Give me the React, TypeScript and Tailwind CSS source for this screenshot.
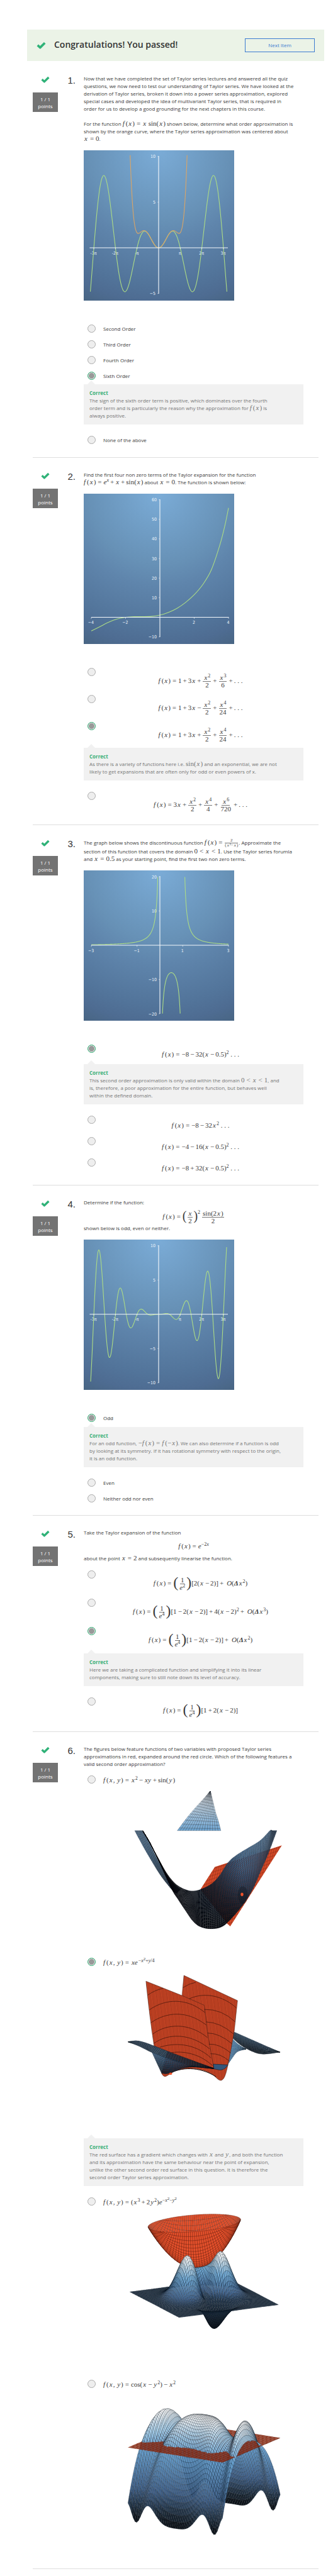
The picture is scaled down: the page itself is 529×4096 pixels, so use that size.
import React from "react";

type Pt = [number, number];

/* ---------- small icons ---------- */

function CheckIcon({ className }: { className: string }) {
  return (
    <svg viewBox="0 0 27 21" className={className} aria-hidden="true">
      <path
        d="M3.2 10.2 L10.4 17 L23.8 3.8"
        fill="none"
        stroke="#2fb278"
        strokeWidth="6.6"
        strokeLinejoin="round"
      />
    </svg>
  );
}

/* ---------- mathematics ---------- */

type Kids = { children?: React.ReactNode };

const M = ({ children }: Kids) => (
  <span className="whitespace-nowrap font-['Liberation_Serif',serif] text-[11px] leading-[10px]">{children}</span>
);
const X = ({ children = "x" }: Kids) => <i className="px-px">{children}</i>;
const Op = ({ children }: Kids) => <span className="mx-[2px]">{children}</span>;
const Rel = ({ children = "=" }: Kids) => <span className="mx-[3px]">{children}</span>;
const Sup = ({ children }: Kids) => <span className="align-[4px] text-[8px] leading-[0px]">{children}</span>;
const Upper = ({ children }: Kids) => <span className="align-[7px] text-[7px] leading-[0px]">{children}</span>;
const Fx = () => (
  <>
    <i className="pr-[2px]">f</i>(<X />)
  </>
);
const Fxy = () => (
  <>
    <i className="pr-[2px]">f</i>(<X />, <X>y</X>)
  </>
);
function Frac({ top, bottom }: { top: React.ReactNode; bottom: React.ReactNode }) {
  return (
    <span className="mx-px inline-flex flex-col items-center align-middle leading-[11px]">
      <span className="border-b border-[#777] px-px">{top}</span>
      <span className="px-px">{bottom}</span>
    </span>
  );
}
function Eq({ children }: Kids) {
  return (
    <span className="block whitespace-nowrap font-['Liberation_Serif',serif] text-[11px] leading-[12px]">
      {children}
    </span>
  );
}
const Big = ({ children }: Kids) => <span className="align-[-3px] text-[24px] leading-[0px]">{children}</span>;
const Mid = ({ children }: Kids) => <span className="align-[-2px] text-[20px] leading-[0px]">{children}</span>;

/* ---------- function plots ---------- */

function smooth(pts: Pt[]) {
  let d = `M${pts[0][0].toFixed(2)} ${pts[0][1].toFixed(2)}`;
  for (let i = 0; i < pts.length - 1; i++) {
    const a = pts[Math.max(i - 1, 0)];
    const b = pts[i];
    const c = pts[i + 1];
    const e = pts[Math.min(i + 2, pts.length - 1)];
    d += `C${(b[0] + (c[0] - a[0]) / 6).toFixed(2)} ${(b[1] + (c[1] - a[1]) / 6).toFixed(2)} ${(
      c[0] -
      (e[0] - b[0]) / 6
    ).toFixed(2)} ${(c[1] - (e[1] - b[1]) / 6).toFixed(2)} ${c[0].toFixed(2)} ${c[1].toFixed(2)}`;
  }
  return d;
}

function sample(f: (x: number) => number, from: number, to: number, n: number): Pt[] {
  return Array.from({ length: n + 1 }, (_, i) => {
    const x = from + ((to - from) * i) / n;
    return [x, f(x)] as Pt;
  });
}

type Curve = { pts: Pt[]; color: string };
type PlotProps = {
  id: string;
  title: string;
  ox: number;
  oy: number;
  sx: number;
  sy: number;
  xAxis: Pt;
  yAxis: Pt;
  xTicks: [number, string][];
  yTicks: [number, string][];
  curves: Curve[];
};

function Plot({ id, title, ox, oy, sx, sy, xAxis, yAxis, xTicks, yTicks, curves }: PlotProps) {
  const text = "fill-[#edf4fa] font-['DejaVu_Sans_Condensed','DejaVu_Sans',sans-serif] text-[7px]";
  return (
    <svg viewBox="0 0 239 239" className="mt-3 block h-[239px] w-[239px]" role="img" aria-label={title}>
      <defs>
        <radialGradient id={id} cx="0.5" cy="0" r="1.12">
          <stop offset="0" stopColor="#7bacd7" />
          <stop offset="0.42" stopColor="#6791b6" />
          <stop offset="0.55" stopColor="#5f85ac" />
          <stop offset="0.8" stopColor="#52749a" />
          <stop offset="0.9" stopColor="#4e6c92" />
          <stop offset="1" stopColor="#486583" />
        </radialGradient>
      </defs>
      <rect width="239" height="239" fill={`url(#${id})`} />
      {yTicks.map(([v, label]) => (
        <text key={label} x={ox - 5} y={oy - v * sy + 2.6} textAnchor="end" className={text}>
          {label}
        </text>
      ))}
      {xTicks.map(([v, label]) => (
        <text key={label} x={ox + v * sx - 0.5} y={oy + 10.5} textAnchor="middle" className={text}>
          {label}
        </text>
      ))}
      {curves.map((c, i) => (
        <path
          key={i}
          d={smooth(c.pts.map(([x, y]) => [ox + x * sx, oy - y * sy] as Pt))}
          fill="none"
          stroke={c.color}
          strokeWidth="1.1"
        />
      ))}
      <g stroke="#f4f8fc" strokeWidth="1.1">
        <path d={`M${xAxis[0]} ${oy}H${xAxis[1]}M${ox} ${yAxis[0]}V${yAxis[1]}`} />
        <path
          strokeWidth="0.6"
          d={
            yTicks.map(([v]) => `M${ox - 1.6} ${oy - v * sy}h1.6`).join("") +
            xTicks.map(([v]) => `M${ox + v * sx} ${oy}v2.4`).join("")
          }
        />
      </g>
    </svg>
  );
}

const GREEN = "#acdb86";
const ORANGE = "#dba566";
const PI = Math.PI;
const piTicks: [number, string][] = [
  [-3 * PI, "-3π"],
  [-2 * PI, "-2π"],
  [-PI, "-π"],
  [PI, "π"],
  [2 * PI, "2π"],
  [3 * PI, "3π"],
];

/* ---------- surface drawings ---------- */

type Stop = [number, number, number, number];

function ramp(stops: Stop[], t: number) {
  let i = 0;
  while (i < stops.length - 2 && t > stops[i + 1][0]) i++;
  const a = stops[i];
  const b = stops[i + 1];
  const k = Math.min(1, Math.max(0, (t - a[0]) / (b[0] - a[0])));
  return `rgb(${[1, 2, 3].map((j) => Math.round(a[j] + (b[j] - a[j]) * k)).join(",")})`;
}

type Quad = { pts: Pt[]; depth: number; fill: string; line: string };

function mesh(
  n: number,
  m: number,
  at: (u: number, v: number) => { p: Pt; depth: number },
  fill: (u: number, v: number) => string,
  line: string,
): Quad[] {
  const out: Quad[] = [];
  for (let i = 0; i < n; i++)
    for (let j = 0; j < m; j++) {
      const c = [at(i / n, j / m), at((i + 1) / n, j / m), at((i + 1) / n, (j + 1) / m), at(i / n, (j + 1) / m)];
      out.push({
        pts: c.map((q) => q.p),
        depth: c.reduce((s, q) => s + q.depth, 0) / 4,
        fill: fill((i + 0.5) / n, (j + 0.5) / m),
        line,
      });
    }
  return out;
}

function Quads({ quads }: { quads: Quad[] }) {
  return (
    <g strokeWidth="0.4" strokeLinejoin="round">
      {quads.map((q, i) => (
        <polygon
          key={i}
          points={q.pts.map((p) => `${p[0].toFixed(1)},${p[1].toFixed(1)}`).join(" ")}
          fill={q.fill}
          stroke={q.line}
          vectorEffect="non-scaling-stroke"
        />
      ))}
    </g>
  );
}

function along(pts: Pt[], t: number): Pt {
  const s = t * (pts.length - 1);
  const i = Math.min(Math.floor(s), pts.length - 2);
  const k = s - i;
  const p0 = pts[Math.max(i - 1, 0)];
  const p1 = pts[i];
  const p2 = pts[i + 1];
  const p3 = pts[Math.min(i + 2, pts.length - 1)];
  const f = (d: 0 | 1) =>
    0.5 *
    (2 * p1[d] +
      (p2[d] - p0[d]) * k +
      (2 * p0[d] - 5 * p1[d] + 4 * p2[d] - p3[d]) * k * k +
      (3 * p1[d] - p0[d] - 3 * p2[d] + p3[d]) * k * k * k);
  return [f(0), f(1)];
}

function loft(a: Pt[], b: Pt[], n: number, m: number, fill: (p: Pt) => string, line: string) {
  const at = (u: number, v: number): Pt => {
    const p = along(a, u);
    const q = along(b, u);
    return [p[0] + (q[0] - p[0]) * v, p[1] + (q[1] - p[1]) * v];
  };
  return mesh(n, m, (u, v) => ({ p: at(u, v), depth: 0 }), (u, v) => fill(at(u, v)), line);
}

const BLUE_HEIGHTS: Stop[] = [
  [-10, 8, 10, 13],
  [-8.6, 30, 44, 58],
  [-6.5, 66, 98, 138],
  [-2.5, 106, 162, 208],
  [-1, 160, 200, 228],
  [0.4, 226, 234, 240],
  [1, 246, 246, 246],
];

function cosineSurface(): Quad[] {
  const project = (x: number, y: number, z: number) => ({
    p: [961 - 45.3 * x + 74.2 * y, 720 + 25.8 * x + 15.8 * y - 58 * (z + 2)] as Pt,
    depth: 74.2 * x + 45.3 * y + z * 0.01,
  });
  const f = (x: number, y: number) => Math.cos(x - y * y) - x * x;
  const g = (t: number) => -3 + 6 * t;
  const n = 54;
  const blue = mesh(
    n,
    n,
    (u, v) => project(g(u), g(v), f(g(u), g(v))),
    (u, v) => ramp(BLUE_HEIGHTS, f(g(u), g(v))),
    "rgba(10,18,26,0.55)",
  );
  const red = mesh(
    n,
    n,
    (u, v) => project(g(u), g(v), -2),
    (_, v) => (Math.floor(v * n) % 2 ? "#8f2f18" : "#b13d20"),
    "rgba(40,10,4,0.25)",
  );
  return [...blue, ...red].sort((a, b) => a.depth - b.depth);
}

const PEAK_HEIGHTS: Stop[] = [
  [-0.41, 12, 16, 22],
  [-0.1, 30, 46, 62],
  [0.02, 36, 56, 78],
  [0.12, 66, 100, 142],
  [0.4, 116, 172, 214],
  [0.58, 196, 218, 232],
  [0.7, 248, 248, 248],
];

function peaksSurface(): Quad[] {
  const f = (x: number, y: number) => (x * x * x + 2 * y * y) * Math.exp(-x * x - y * y);
  const g = (t: number) => -3 + 6 * t;
  const bowl = mesh(
    34,
    34,
    (a, b) => {
      const u = 2 * a - 1;
      const v = 2 * b - 1;
      const s = u * Math.sqrt(1 - (v * v) / 2);
      const t = v * Math.sqrt(1 - (u * u) / 2);
      const r2 = s * s + t * t;
      return { p: [928 + s * 218 - r2 * 13, 1166 - s * 20 + t * 47 - r2 * 246] as Pt, depth: t };
    },
    () => "#e4502b",
    "rgba(40,10,4,0.6)",
  ).sort((p, q) => p.depth - q.depth);
  const blue = mesh(
    60,
    60,
    (u, v) => {
      const x = g(u);
      const y = g(v);
      return {
        p: [961 - 38.7 * x + 78 * y, 1338 - 23.8 * x - 11.8 * y - 340 * f(x, y)] as Pt,
        depth: -(78 * x + 38.7 * y),
      };
    },
    (u, v) => ramp(PEAK_HEIGHTS, f(g(u), g(v))),
    "rgba(10,18,26,0.55)",
  ).sort((p, q) => p.depth - q.depth);
  return [...bowl, ...blue];
}

const clamp = (t: number) => Math.min(1, Math.max(0, t));

function SaddleFigure() {
  const tip = loft(
    [[425, 243], [500, 178], [565, 127], [625, 84], [686, 38]],
    [[773, 243], [752, 190], [732, 150], [712, 95], [690, 38]],
    14,
    16,
    (p) => ramp([[38, 245, 247, 250], [130, 190, 214, 234], [243, 108, 163, 208]], p[1]),
    "rgba(10,18,26,0.6)",
  );
  const arm = loft(
    [[85, 243], [150, 322], [230, 412], [300, 484], [385, 553], [420, 570]],
    [[148, 243], [195, 298], [255, 378], [320, 455], [380, 508], [450, 550]],
    40,
    10,
    (p) => ramp([[243, 92, 126, 158], [380, 62, 98, 132], [560, 30, 46, 64]], p[1]),
    "rgba(5,10,16,0.5)",
  );
  const body = loft(
    [[148, 243], [200, 300], [270, 385], [340, 465], [410, 520], [480, 548], [545, 558], [610, 550], [700, 520], [765, 475], [830, 410], [900, 370], [1000, 330], [1090, 293], [1165, 243], [1180, 243]],
    [[152, 246], [218, 320], [295, 425], [385, 553], [430, 600], [490, 660], [550, 715], [610, 745], [695, 756], [790, 742], [880, 685], [960, 620], [1030, 545], [1090, 455], [1150, 365], [1220, 243]],
    90,
    26,
    ([x, y]) => {
      const k = clamp((x - 380) / 560) * clamp((770 - y) / 330);
      return ramp([[0, 6, 8, 12], [0.35, 24, 36, 50], [0.75, 54, 84, 116], [1, 82, 118, 152]], k * (0.85 + 0.15 * clamp((430 - y) / 150)));
    },
    "rgba(4,8,14,0.45)",
  );
  return (
    <svg viewBox="-166 17 1558 765" preserveAspectRatio="none" className="block h-[233px] w-full" role="img" aria-label="Saddle surface with a red tangent plane">
      <defs>
        <pattern id="planeLines" width="14" height="17" patternUnits="userSpaceOnUse" patternTransform="rotate(-12)">
          <rect width="14" height="17" fill="#d94a28" />
          <path d="M0 2H14M2 0V17" stroke="#3a0f06" strokeWidth="2" opacity="0.6" />
        </pattern>
      </defs>
      <Quads quads={tip} />
      <polygon points="610,550 725,432 1260,320 848,743 822,728" fill="url(#planeLines)" />
      <Quads quads={arm} />
      <Quads quads={body} />
      <ellipse cx="948" cy="580" rx="40" ry="46" fill="#0b131c" opacity="0.35" />
      <ellipse cx="942" cy="576" rx="11" ry="9" fill="#f0522b" />
    </svg>
  );
}

function SheetsFigure() {
  const wing = loft(
    [[33, 1345], [100, 1340], [170, 1350], [260, 1372], [400, 1408], [560, 1446], [715, 1483]],
    [[33, 1347], [110, 1366], [180, 1388], [225, 1402], [380, 1440], [560, 1472], [715, 1485]],
    50,
    9,
    (p) => ramp([[33, 62, 92, 120], [300, 44, 70, 94], [715, 30, 46, 62]], p[0]),
    "rgba(5,10,16,0.55)",
  );
  const belly = loft(
    [[222, 1400], [300, 1420], [400, 1440], [500, 1462], [600, 1474], [715, 1484]],
    [[300, 1510], [345, 1512], [400, 1500], [470, 1484], [560, 1477], [715, 1486]],
    30,
    8,
    (p) => ramp([[1400, 74, 112, 148], [1450, 50, 78, 106], [1510, 24, 36, 50]], p[1]),
    "rgba(5,10,16,0.5)",
  );
  const back = loft(
    [[860, 1289], [930, 1309], [1010, 1332], [1100, 1358], [1245, 1399]],
    [[860, 1322], [930, 1362], [1020, 1395], [1110, 1410], [1245, 1400]],
    40,
    9,
    ([x, y]) => ramp([[0, 66, 100, 130], [1, 22, 34, 46]], clamp((y - 1290 - (x - 860) * 0.2) / 60)),
    "rgba(5,10,16,0.55)",
  );
  const slope = loft(
    [[850, 1318], [880, 1340], [920, 1362], [975, 1384]],
    [[820, 1472], [860, 1434], [905, 1398], [975, 1384]],
    12,
    12,
    () => "#5f98c8",
    "rgba(5,10,16,0.5)",
  );
  return (
    <svg viewBox="-166 990 1558 570" preserveAspectRatio="none" className="mt-[6px] block h-[174px] w-full" role="img" aria-label="Folded blue surface with a steep red approximation">
      <defs>
        <pattern id="sheetLines" width="9" height="40" patternUnits="userSpaceOnUse" patternTransform="rotate(-3)">
          <rect width="9" height="40" fill="#e04e2a" />
          <path d="M2 0V40" stroke="#4a1408" strokeWidth="3" opacity="0.7" />
        </pattern>
      </defs>
      <Quads quads={slope} />
      <Quads quads={back} />
      <g stroke="#3a1a12" strokeWidth="0.5">
        <path d="M463 1105 L478 1000 L906 1131 L880 1290 L850 1400 L825 1480 C810 1525 795 1547 770 1547 C745 1545 725 1520 690 1510 C600 1478 480 1478 400 1500 L345 1522 Q318 1535 300 1510 Z" fill="url(#sheetLines)" vectorEffect="non-scaling-stroke" />
        <path d="M175 1030 L463 1105 L640 1155 L670 1310 L718 1487 L240 1368 Q205 1220 175 1030Z" fill="url(#sheetLines)" vectorEffect="non-scaling-stroke" />
      </g>
      <path
        d="M188 1103Q250 1075 312 1067M201 1180C330 1120 500 1115 645 1193M215 1246C340 1190 500 1180 656 1258M228 1306C340 1250 520 1245 667 1324M236 1355C350 1300 530 1300 682 1382M285 1374C400 1350 560 1350 695 1430M380 1402C480 1392 610 1410 706 1470M470 1064Q520 1042 572 1036M520 1122C640 1085 790 1105 898 1170M642 1177Q780 1175 888 1242M655 1242Q770 1245 874 1305M665 1300Q760 1300 862 1356M678 1358Q760 1355 853 1404M690 1408Q770 1405 842 1447"
        fill="none"
        stroke="#2a0c05"
        strokeWidth="0.6"
        vectorEffect="non-scaling-stroke"
      />
      <path d="M360 1512C450 1478 600 1472 735 1528" fill="none" stroke="#1a0a06" strokeWidth="1" vectorEffect="non-scaling-stroke" />
      <Quads quads={belly} />
      <Quads quads={wing} />
      <path d="M712 1462L830 1466Q805 1493 765 1493L718 1487Z" fill="#34567a" stroke="#101a24" strokeWidth="0.6" vectorEffect="non-scaling-stroke" />
      <ellipse cx="372" cy="1512" rx="13" ry="6" fill="#f0522b" />
    </svg>
  );
}

/* ---------- quiz layout ---------- */

function Radio({ name, checked, children, rowClass = "h-[25px]" }: { name: string; checked?: boolean; rowClass?: string } & Kids) {
  return (
    <label className={`flex pl-[6px] pr-[9px] ${rowClass}`}>
      <input
        type="radio"
        name={name}
        defaultChecked={checked}
        className="mt-[6px] size-[13px] shrink-0 appearance-none rounded-full border border-[#ababab] bg-[#eee] checked:border-[#2fae73] checked:bg-[#999] checked:shadow-[inset_0_0_0_1px_#eee]"
      />
      {children}
    </label>
  );
}

const Plain = ({ children }: Kids) => (
  <span className="ml-3 flex h-[25px] items-center whitespace-nowrap">{children}</span>
);
const Tall = ({ children }: Kids) => (
  <span className="ml-3 flex h-[54px] flex-1 items-center justify-center">
    <Eq>{children}</Eq>
  </span>
);
const Low = ({ children }: Kids) => (
  <span className="ml-3 flex h-[42px] flex-1 items-center justify-center">
    <Eq>{children}</Eq>
  </span>
);

function Feedback({ children, className }: { className: string } & Kids) {
  return (
    <div className={`relative bg-[#f1f1f1] px-[9px] py-2 text-[#757575] ${className}`}>
      <span className="absolute -top-[6px] left-[6px] border-x-[6px] border-b-[6px] border-x-transparent border-b-[#f1f1f1]" />
      <p className="font-bold text-[#3cb078]">Correct</p>
      <p className="whitespace-nowrap">{children}</p>
    </div>
  );
}

function Question({ n, pad = "pb-[15px]", children }: { n: number; pad?: string } & Kids) {
  return (
    <section className={`ml-[52px] mr-[23px] flex border-b border-[#dedede] pr-6 pt-[21px] ${pad}`}>
      <div className="w-10 shrink-0">
        <CheckIcon className="mx-auto mt-[2px] block h-[11px] w-[14px]" />
        <div className="mt-[15px] flex h-[31px] flex-col justify-center bg-[#737373] text-center leading-[11px] text-white">
          <span>1 / 1</span>
          <span>points</span>
        </div>
      </div>
      <div className="w-7 shrink-0 pt-px text-right font-['Liberation_Sans',sans-serif] text-[15px] leading-4 text-[#333]">
        {n}.
      </div>
      <div className="ml-[13px] min-w-0 flex-1">{children}</div>
    </section>
  );
}

const poly = (sign: string, den: string, pow: string) => (
  <>
    <Fx />
    <Rel />1<Op>+</Op>3<X />
    <Op>{sign}</Op>
    <Frac top={<><X /><Sup>2</Sup></>} bottom="2" />
    <Op>+</Op>
    <Frac top={<><X /><Sup>{pow}</Sup></>} bottom={den} />
    <Op>+</Op>. . .
  </>
);

const quad = (a: string, sign: string, b: string) => (
  <>
    <Fx />
    <Rel />−{a}
    <Op>{sign}</Op>
    {b}(<X />
    <Op>−</Op>0.5)<Sup>2</Sup> . . .
  </>
);

const inverse = (pow: string) => (
  <>
    <Fx />
    <Rel />
    <Big>(</Big>
    <Frac top="1" bottom={<><i>e</i><Sup>{pow}</Sup></>} />
    <Big>)</Big>
  </>
);

const order = (pow: string) => (
  <>
    <i className="ml-[3px]">O</i>(<b><i>Δ</i></b>
    <X />
    <Sup>{pow}</Sup>)
  </>
);

export default function App() {
  return (
    <main className="min-w-[529px] bg-white pt-[47px] font-['Open_Sans',sans-serif] text-[8px] leading-3 text-[#3a3a3a] pb-3">
      <header className="ml-[43px] mr-[14px] flex h-[50px] items-center bg-[#ebf3e7] px-[15px]">
        <CheckIcon className="h-[12px] w-[15px]" />
        <h1 className="ml-[13px] pb-[3px] text-[14px] font-semibold leading-5 text-[#333]">Congratulations! You passed!</h1>
        <button className="ml-auto h-[22px] w-[111px] border border-[#3c7bd0] text-[8px] text-[#3c7bd0]">Next Item</button>
      </header>

      <div className="mt-px">
        <Question n={1}>
          <p className="whitespace-nowrap">
            Now that we have completed the set of Taylor series lectures and answered all the quiz
            <br />
            questions, we now need to test our understanding of Taylor series. We have looked at the
            <br />
            derivation of Taylor series, broken it down into a power series approximation, explored
            <br />
            special cases and developed the idea of multivariant Taylor series, that is required in
            <br />
            order for us to develop a good grounding for the next chapters in this course.
          </p>
          <p className="mt-3 whitespace-nowrap">
            For the function <M><Fx /><Rel /><X /> sin(<X />)</M> shown below, determine what order approximation is
            <br />
            shown by the orange curve, where the Taylor series approximation was centered about
            <br />
            <M><X /><Rel />0</M>.
          </p>
          <Plot
            id="bg1"
            title="x sin(x) and its approximation"
            ox={119}
            oy={155}
            sx={10.92}
            sy={14.53}
            xAxis={[9.4, 229]}
            yAxis={[9, 228]}
            xTicks={piTicks}
            yTicks={[[10, "10"], [5, "5"], [-5, "−5"]]}
            curves={[
              { pts: sample((x) => x * Math.sin(x), -9.93, 9.93, 160), color: GREEN },
              { pts: sample((x) => x ** 2 - x ** 4 / 6 + x ** 6 / 120, -4.14, 4.14, 80), color: ORANGE },
            ]}
          />
          <div className="mt-8">
            <Radio name="q1"><Plain>Second Order</Plain></Radio>
            <Radio name="q1"><Plain>Third Order</Plain></Radio>
            <Radio name="q1"><Plain>Fourth Order</Plain></Radio>
            <Radio name="q1" checked><Plain>Sixth Order</Plain></Radio>
            <Feedback className="mt-px mb-3">
              The sign of the sixth order term is positive, which dominates over the fourth
              <br />
              order term and is particularly the reason why the approximation for <M><Fx /></M> is
              <br />
              always positive.
            </Feedback>
            <Radio name="q1"><Plain>None of the above</Plain></Radio>
          </div>
        </Question>

        <Question n={2}>
          <p className="whitespace-nowrap">
            Find the first four non zero terms of the Taylor expansion for the function
            <br />
            <M><Fx /><Rel /><i>e</i><Sup><i>x</i></Sup><Op>+</Op><X /><Op>+</Op>sin(<X />)</M> about <M><X /><Rel />0</M>. The function is shown below:
          </p>
          <Plot
            id="bg2"
            title="Graph of the exponential function"
            ox={121}
            oy={196.5}
            sx={27.25}
            sy={3.116}
            xAxis={[12, 230.5]}
            yAxis={[9, 228]}
            xTicks={[[-4, "−4"], [-2, "−2"], [2, "2"], [4, "4"]]}
            yTicks={[[60, "60"], [50, "50"], [40, "40"], [30, "30"], [20, "20"], [10, "10"], [-10, "−10"]]}
            curves={[
              {
                pts: [[-4, -7], [-3.5, -4.8], [-3, -2.6], [-2.5, -0.9], [-2, 0], [-1.5, 0.3], [-1, 0.3], [-0.5, 0.45], [0, 1.1], [0.5, 2.5], [1, 4.6], [1.5, 7.6], [2, 11.5], [2.5, 16.7], [3, 24.2], [3.5, 37], [3.8, 47.2], [4, 55.8]],
                color: GREEN,
              },
            ]}
          />
          <div className="mt-8">
            <Radio name="q2" rowClass="h-[43px]"><Tall>{poly("+", "6", "3")}</Tall></Radio>
            <Radio name="q2" rowClass="h-[43px]"><Tall>{poly("−", "24", "4")}</Tall></Radio>
            <Radio name="q2" rowClass="h-[43px]" checked><Tall>{poly("+", "24", "4")}</Tall></Radio>
            <Feedback className="mt-1 mb-3">
              As there is a variety of functions here i.e. <M>sin(<X />)</M> and an exponential, we are not
              <br />
              likely to get expansions that are often only for odd or even powers of x.
            </Feedback>
            <Radio name="q2" rowClass="h-[43px]">
              <Tall>
                <Fx />
                <Rel />3<X />
                <Op>+</Op>
                <Frac top={<><X /><Sup>2</Sup></>} bottom="2" />
                <Op>+</Op>
                <Frac top={<><X /><Sup>4</Sup></>} bottom="4" />
                <Op>+</Op>
                <Frac top={<><X /><Sup>6</Sup></>} bottom="720" />
                <Op>+</Op>. . .
              </Tall>
            </Radio>
          </div>
        </Question>

        <Question n={3} pad="pb-[14px]">
          <p className="whitespace-nowrap">
            The graph below shows the discontinuous function{" "}
            <M>
              <Fx />
              <Rel />
              <span className="mx-px inline-flex flex-col items-center align-middle text-[7px] leading-[7px]">
                <span>2</span>
                <span className="border-t border-[#777]">(<X />²−<X />)</span>
              </span>
            </M>
            . Approximate the
            <br />
            section of this function that covers the domain <M>0<Rel>&lt;</Rel><X /><Rel>&lt;</Rel>1</M>. Use the Taylor series forumla
            <br />
            and <M><X /><Rel />0.5</M> as your starting point, find the first two non zero terms.
          </p>
          <Plot
            id="bg3"
            title="Graph of a discontinuous function"
            ox={121}
            oy={119}
            sx={36.3}
            sy={5.445}
            xAxis={[12, 230.5]}
            yAxis={[9, 228]}
            xTicks={[[-3, "−3"], [-1, "−1"], [1, "1"], [3, "3"]]}
            yTicks={[[20, "20"], [10, "10"], [-10, "−10"], [-20, "−20"]]}
            curves={[
              { pts: sample((x) => 2 / (x * x - x), -3, -0.092, 120), color: GREEN },
              { pts: sample((x) => 2 / (x * x - x), 0.113, 0.887, 60), color: GREEN },
              { pts: sample((x) => 2 / (x * x - x), 1.092, 3, 120), color: GREEN },
            ]}
          />
          <div className="mt-8">
            <Radio name="q3" rowClass="h-[34px]" checked><Low>{quad("8", "−", "32")}</Low></Radio>
            <Feedback className="mt-[3px] mb-3">
              This second order approximation is only valid within the domain <M>0<Rel>&lt;</Rel><X /><Rel>&lt;</Rel>1</M>, and
              <br />
              is, therefore, a poor approximation for the entire function, but behaves well
              <br />
              within the defined domain.
            </Feedback>
            <Radio name="q3" rowClass="h-[34px]">
              <Low>
                <Fx />
                <Rel />−8<Op>−</Op>32<X />
                <Sup>2</Sup> . . .
              </Low>
            </Radio>
            <Radio name="q3" rowClass="h-[34px]"><Low>{quad("4", "−", "16")}</Low></Radio>
            <Radio name="q3" rowClass="h-[34px]"><Low>{quad("8", "+", "32")}</Low></Radio>
          </div>
        </Question>

        <Question n={4} pad="pb-[14px]">
          <p>Determine if the function:</p>
          <div className="flex h-[29px] items-end justify-center">
            <Eq>
              <Fx />
              <Rel />
              <Mid>(</Mid>
              <Frac top={<X />} bottom="2" />
              <Mid>)</Mid>
              <span className="mr-[2px] align-[8px] text-[8px] leading-[0px]">2</span>
              <Frac top={<>sin(2<X />)</>} bottom="2" />
            </Eq>
          </div>
          <p>shown below is odd, even or neither.</p>
          <Plot
            id="bg4"
            title="Graph of an oscillating function"
            ox={119}
            oy={118.8}
            sx={10.92}
            sy={10.9}
            xAxis={[9.4, 229]}
            yAxis={[9, 228]}
            xTicks={piTicks}
            yTicks={[[10, "10"], [5, "5"], [-5, "−5"], [-10, "−10"]]}
            curves={[{ pts: sample((x) => ((x * x) / 8) * Math.sin(2 * x), -9.89, 9.89, 260), color: GREEN }]}
          />
          <div className="mt-8">
            <Radio name="q4" checked><Plain>Odd</Plain></Radio>
            <Feedback className="mt-[2px] mb-3">
              For an odd function, <M>−<Fx /><Rel /><i className="pr-[2px]">f</i>(−<X />)</M>. We can also determine if a function is odd
              <br />
              by looking at its symmetry. If it has rotational symmetry with respect to the origin,
              <br />
              it is an odd function.
            </Feedback>
            <Radio name="q4"><Plain>Even</Plain></Radio>
            <Radio name="q4"><Plain>Neither odd nor even</Plain></Radio>
          </div>
        </Question>

        <Question n={5}>
          <p>Take the Taylor expansion of the function</p>
          <div className="flex h-[29px] items-center justify-center">
            <Eq>
              <Fx />
              <Rel />
              <i>e</i>
              <Sup>−2<i>x</i></Sup>
            </Eq>
          </div>
          <p>
            about the point <M><X /><Rel />2</M> and subsequently linearise the function.
          </p>
          <div className="mt-[7px]">
            <Radio name="q5" rowClass="h-[45px]">
              <Tall>{inverse("2")}[2(<X /><Op>−</Op>2)]<Op>+</Op>{order("2")}</Tall>
            </Radio>
            <Radio name="q5" rowClass="h-[45px]">
              <Tall>{inverse("4")}[1<Op>−</Op>2(<X /><Op>−</Op>2)]<Op>+</Op>4(<X /><Op>−</Op>2)<Sup>2</Sup><Op>+</Op>{order("3")}</Tall>
            </Radio>
            <Radio name="q5" rowClass="h-[45px]" checked>
              <Tall>{inverse("4")}[1<Op>−</Op>2(<X /><Op>−</Op>2)]<Op>+</Op>{order("2")}</Tall>
            </Radio>
            <Feedback className="mt-[3px] mb-3">
              Here we are taking a complicated function and simplifying it into its linear
              <br />
              components, making sure to still note down its level of accuracy.
            </Feedback>
            <Radio name="q5" rowClass="h-[45px]">
              <Tall>{inverse("4")}[1<Op>+</Op>2(<X /><Op>−</Op>2)]</Tall>
            </Radio>
          </div>
        </Question>

        <Question n={6} pad="pb-[51px]">
          <p className="whitespace-nowrap">
            The figures below feature functions of two variables with proposed Taylor series
            <br />
            approximations in red, expanded around the red circle. Which of the following features a
            <br />
            valid second order approximation?
          </p>
          <div className="mt-[6px]">
            <Radio name="q6">
              <Plain><M><Fxy /><Rel /><X /><Sup>2</Sup><Op>−</Op><X>xy</X><Op>+</Op>sin(<X>y</X>)</M></Plain>
            </Radio>
            <div className="pl-[31px] pr-2"><SaddleFigure /></div>
            <div className="mt-8">
              <Radio name="q6" checked>
                <Plain><M><Fxy /><Rel /><X>xe</X><Sup>−<i>x</i></Sup><Upper>2</Upper><Sup>+<i>y</i>/4</Sup></M></Plain>
              </Radio>
            </div>
            <div className="pl-[31px] pr-2"><SheetsFigure /></div>
            <Feedback className="mt-[88px] mb-3">
              The red surface has a gradient which changes with <M><X /></M> and <M><X>y</X></M>, and both the function
              <br />
              and its approximation have the same behaviour near the point of expansion,
              <br />
              unlike the other second order red surface in this question. It is therefore the
              <br />
              second order Taylor series approximation.
            </Feedback>
            <Radio name="q6">
              <Plain><M><Fxy /><Rel />(<X /><Sup>3</Sup><Op>+</Op>2<X>y</X><Sup>2</Sup>)<i>e</i><Sup>−<i>x</i></Sup><Upper>2</Upper><Sup>−<i>y</i></Sup><Upper>2</Upper></M></Plain>
            </Radio>
            <div className="pl-[31px] pr-2">
              <svg viewBox="486 860 919 655" preserveAspectRatio="none" className="mt-[5px] block h-[187px] w-full" role="img" aria-label="Blue peaks below a red bowl">
                <Quads quads={peaksSurface()} />
              </svg>
            </div>
            <div className="mt-[73px]">
              <Radio name="q6">
                <Plain><M><Fxy /><Rel />cos(<X /><Op>−</Op><X>y</X><Sup>2</Sup>)<Op>−</Op><X /><Sup>2</Sup></M></Plain>
              </Radio>
            </div>
            <div className="pl-[31px] pr-2">
              <svg viewBox="486 490 919 820" preserveAspectRatio="none" className="mt-[23px] block h-[207px] w-full" role="img" aria-label="Blue arches cut by a flat red plane">
                <Quads quads={cosineSurface()} />
              </svg>
            </div>
          </div>
        </Question>
      </div>
    </main>
  );
}
